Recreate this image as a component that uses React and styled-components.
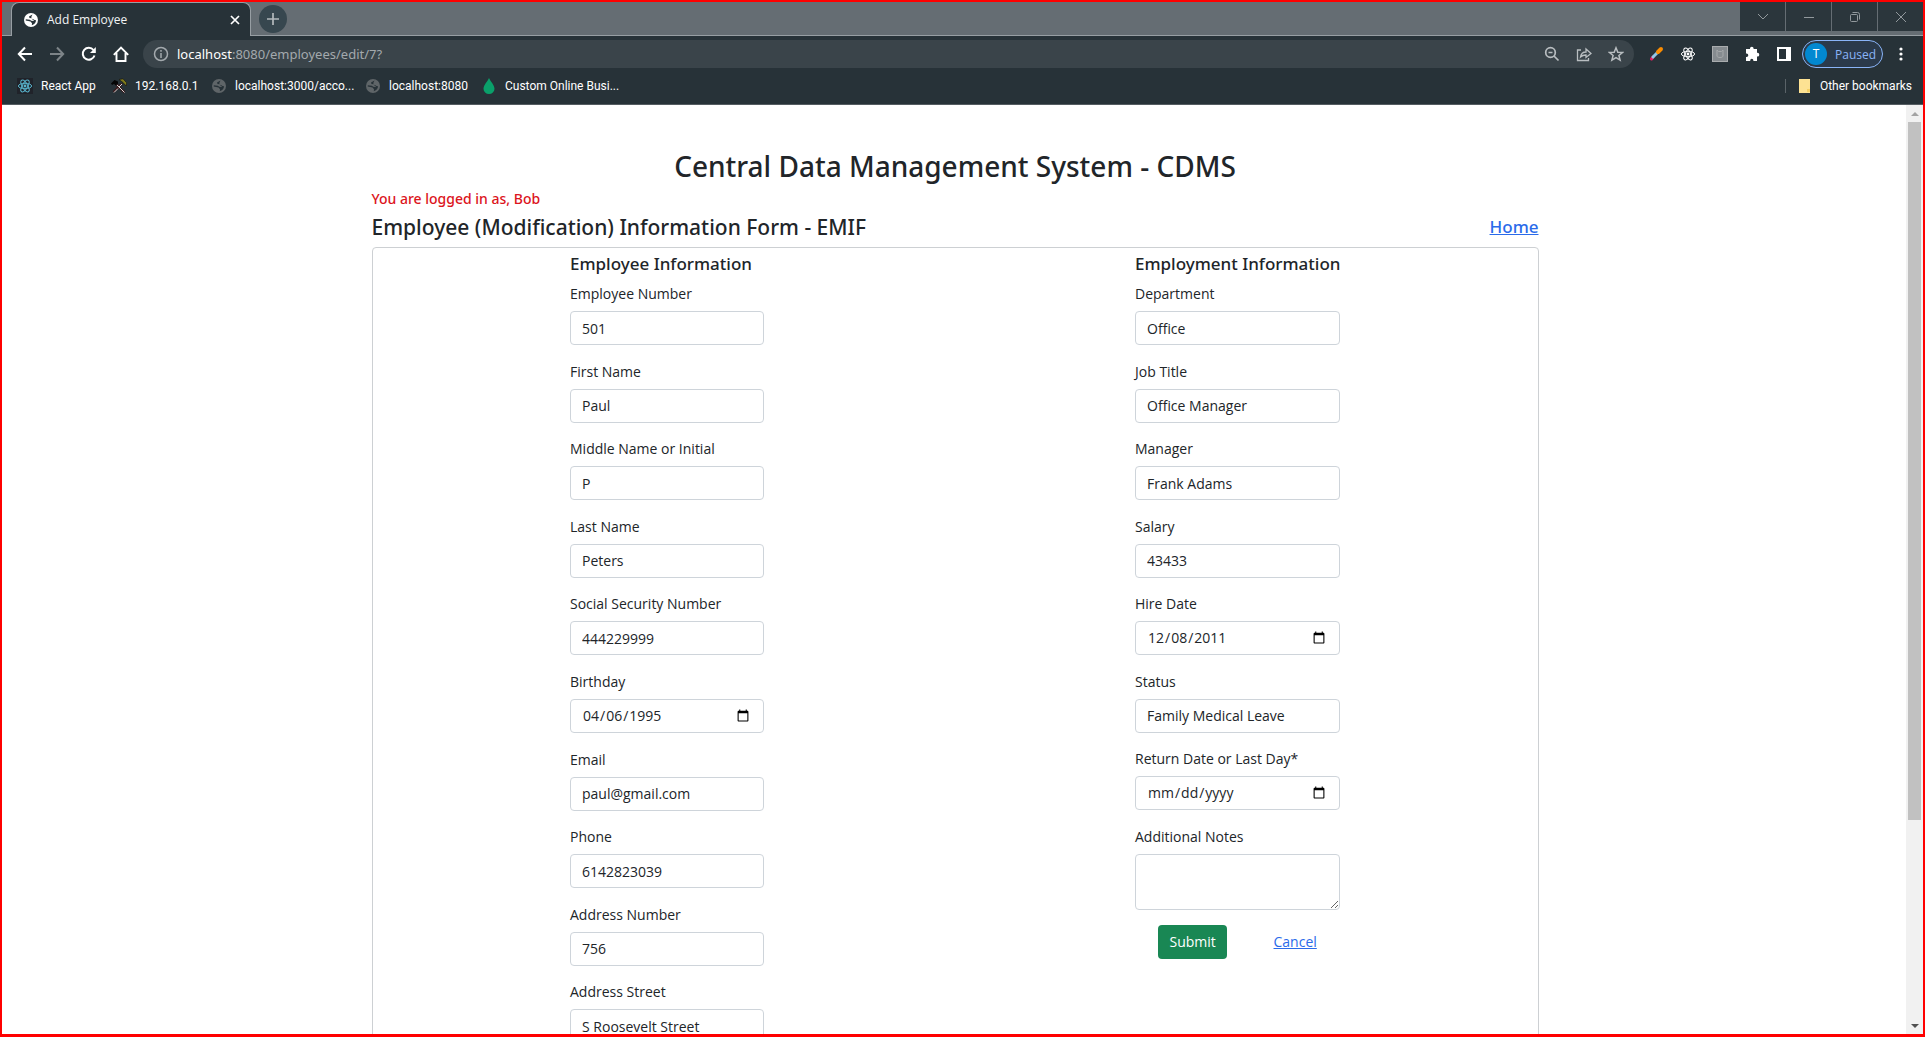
import React from "react";
import styled, { createGlobalStyle } from "styled-components";

const Global = createGlobalStyle`
  *, *::before, *::after { box-sizing: border-box; }
  body { margin: 0; font-family: "Open Sans", "Noto Sans", sans-serif; }
  button, input, textarea { font: inherit; }
`;

const Frame = styled.div`
  height: 100vh;
  display: flex;
  flex-direction: column;
  overflow: hidden;
  border: solid #f00;
  border-width: 2px 2px 3px 2px;
  background: #fff;
`;

const Strip = styled.div`
  display: flex;
  height: 34px;
  padding-left: 9px;
  background: #656d73;
  border-bottom: 1px solid #979ea3;
`;

const Tab = styled.div`
  display: flex;
  align-items: center;
  width: 240px;
  height: 34px;
  padding: 0 10px 0 11px;
  gap: 8px;
  border: 1px solid #979ea3;
  border-bottom: 0;
  border-radius: 8px 8px 0 0;
  background: #273238;
  color: #f1f3f4;
  font-size: 12px;
`;

const TabName = styled.span`
  flex: 1;
`;

const IconButton = styled.button`
  display: inline-flex;
  align-items: center;
  justify-content: center;
  width: ${(p) => p.$w || 32}px;
  height: ${(p) => p.$h || 28}px;
  padding: 0;
  border: 0;
  border-radius: ${(p) => (p.$round ? 14 : 0)}px;
  background: ${(p) => p.$bg || "none"};
  color: ${(p) => p.$color || "#fff"};
`;

const NewTab = styled(IconButton)`
  margin: 3px 0 0 8px;
`;

const WindowButtons = styled.div`
  display: flex;
  gap: 1px;
  height: 29px;
  margin-left: auto;
`;

const Toolbar = styled.div`
  display: flex;
  align-items: center;
  height: 36px;
  padding: 0 6px 0 7px;
  background: #273238;
`;

const Omnibox = styled.div`
  display: flex;
  align-items: center;
  flex: 1;
  height: 28px;
  margin: 0 6px 0 6px;
  padding: 0 2px 0 10px;
  gap: 8px;
  border-radius: 14px;
  background: #3a444a;
  color: #a3a9ad;
  font-family: "Noto Sans", sans-serif;
  font-size: 13px;
`;

const Url = styled.span`
  flex: 1;
  b { font-weight: 400; color: #fff; }
`;

const OmniActions = styled.div`
  display: flex;
`;

const Profile = styled.button`
  display: flex;
  align-items: center;
  width: 81px;
  height: 28px;
  margin: 0 2px;
  padding: 0 2px;
  gap: 8px;
  border: 1px solid #8ab4f8;
  border-radius: 14px;
  background: #2b3a4b;
  color: #8ab4f8;
  font-size: 12px;
`;

const Avatar = styled.span`
  width: 22px;
  height: 22px;
  line-height: 22px;
  border-radius: 50%;
  background: #0288d1;
  color: #fff;
`;

const Bookmarks = styled.nav`
  display: flex;
  align-items: center;
  height: 33px;
  padding: 0 11px 4px 15px;
  background: #273238;
  border-bottom: 1px solid #555d62;
  color: #fff;
  font-family: Roboto, "Open Sans", sans-serif;
  font-size: 12px;
`;

const Bookmark = styled.a`
  display: flex;
  align-items: center;
  gap: 8px;
  width: ${(p) => (p.$w ? p.$w + "px" : "auto")};
  color: inherit;
  text-decoration: none;
  white-space: nowrap;
`;

const Other = styled.div`
  display: flex;
  margin-left: auto;
  padding-left: 12px;
  border-left: 1px solid #5a6368;
`;

const Viewport = styled.div`
  flex: 1;
  min-height: 0;
  display: flex;
`;

const Page = styled.main`
  flex: 1;
  overflow: hidden;
  padding: 43px 0 0 2px;
  color: #212529;
  font-size: 14px;
  line-height: 22px;
`;

const Container = styled.div`
  max-width: 1167px;
  margin: 0 auto;
`;

const Title = styled.h1`
  margin: 0 0 3px;
  text-align: center;
  font-family: "Noto Sans", sans-serif;
  font-size: 28px;
  line-height: 36px;
  font-weight: 500;
`;

const Login = styled.p`
  margin: 0;
  color: #dc1420;
  font-family: "Noto Sans", sans-serif;
  font-size: 14px;
  line-height: 24px;
  font-weight: 500;
`;

const HeadRow = styled.div`
  display: flex;
  justify-content: space-between;
  align-items: center;
  height: 32px;
`;

const FormTitle = styled.h2`
  margin: 0;
  font-family: "Noto Sans", sans-serif;
  font-size: 21px;
  font-weight: 500;
`;

const Link = styled.a`
  color: #2a6bea;
  font-size: 14px;
`;

const HomeLink = styled(Link)`
  font-family: "Noto Sans", sans-serif;
  font-size: 17px;
  font-weight: 500;
`;

const Card = styled.form`
  display: flex;
  justify-content: space-around;
  align-items: flex-start;
  margin-top: 4px;
  padding: 4px 12px;
  border: 1px solid #cdd0d3;
  border-radius: 4px;
`;

const Column = styled.section`
  width: ${(p) => p.$w}px;
`;

const ColumnTitle = styled.h3`
  margin: 0 0 7px;
  font-family: "Noto Sans", sans-serif;
  font-size: 17px;
  line-height: 24px;
  font-weight: 500;
  white-space: nowrap;
`;

const Fields = styled.div`
  display: grid;
  grid-auto-rows: 1fr;
  height: ${(p) => p.$h}px;
`;

const Field = styled.div`
  display: flex;
  flex-direction: column;
  gap: 6px;
`;

const Input = styled.input`
  width: 100%;
  height: 34px;
  padding: 5px 11px;
  border: 1px solid #ced4da;
  border-radius: 4px;
  background: #fff;
  color: #212529;
  line-height: 22px;
`;

const Notes = styled.textarea`
  display: block;
  width: 100%;
  height: 56px;
  padding: 5px 11px;
  border: 1px solid #ced4da;
  border-radius: 4px;
`;

const Actions = styled.div`
  display: flex;
  justify-content: space-around;
  align-items: center;
  margin-top: 15px;
`;

const Submit = styled.button`
  width: 69px;
  height: 34px;
  padding: 0;
  border: 0;
  border-radius: 4px;
  background: #198754;
  color: #fff;
`;

const Scrollbar = styled.div`
  display: flex;
  flex-direction: column;
  align-items: center;
  width: 17px;
  background: #f1f1f1;
`;

const Arrow = styled.div`
  display: flex;
  align-items: center;
  justify-content: center;
  height: 17px;
`;

const Track = styled.div`
  flex: 1;
  width: 13px;
`;

const Thumb = styled.div`
  height: 78%;
  background: #c1c1c1;
`;

const Svg = ({ s = 16, children, vb = "0 0 16 16", ...rest }) => (
  <svg width={s} height={s} viewBox={vb} fill="none" stroke="currentColor" strokeWidth="2" aria-hidden="true" {...rest}>
    {children}
  </svg>
);

const Globe = ({ bg = "#fff", fg = "#273238" }) => (
  <Svg stroke="none">
    <circle cx="8" cy="8" r="7" fill={bg} />
    <path fill={fg} d="M9.500 2.400 6 4.600 6.500 6 9 6.300l.5 1.400 3.600.6c-.2 2.500-2 4.500-4.300 4.900L9 11.300 7.500 9.500 2.700 8.600l.1-1.300 4 .4 1.500 1 2 .2 1-1.300-1.800-.6L8.200 5.300z" />
  </Svg>
);

const Atom = ({ s = 16, color = "#61dafb", bg }) => (
  <Svg s={s} stroke={color} strokeWidth="1">
    {bg && <rect width="16" height="16" fill={bg} stroke="none" />}
    {[0, 60, 120].map((a) => (
      <ellipse key={a} cx="8" cy="8" rx="6.6" ry="2.7" transform={`rotate(${a} 8 8)`} />
    ))}
    <circle cx="8" cy="8" r="1.4" fill={color} stroke="none" />
  </Svg>
);

const Tools = () => (
  <Svg strokeWidth="1.400">
    <path d="M5 6 13.500 14.500M11 5.500 2.500 14" stroke="#3a1a1d" strokeWidth="2.400" />
    <path d="M5.500 6.500l8 8M11 6l-3 3M7 10.500l-4 4" stroke="#d8d8d8" strokeWidth="1" />
    <path d="M0 5.500 3.500 2 7 3.500v2L5 7.500 3 6 1 7z" fill="#050505" stroke="none" />
    <path d="M8 1.500 12 .8l3.700 4-.5 3.200-3.200-3.500z" fill="#7f7a1c" stroke="#111" strokeWidth=".6" />
  </Svg>
);

const Drop = () => (
  <Svg stroke="none"><path fill="#0aa06a" d="M8 0C6.500 3.500 2.500 7 2.500 10.800a5.500 5.200 0 0 0 11 0C13.500 7 9.500 3.500 8 0z" /></Svg>
);

const marks = [
  ["React App", 94, <Atom bg="#20232a" color="#58b4cc" />],
  ["192.168.0.1", 100, <Tools />],
  ["localhost:3000/acco...", 154, <Globe bg="#5f6568" />],
  ["localhost:8080", 116, <Globe bg="#5f6568" />],
  ["Custom Online Busi...", 0, <Drop />],
];

const employee = [
  ["Employee Number", "501"],
  ["First Name", "Paul"],
  ["Middle Name or Initial", "P"],
  ["Last Name", "Peters"],
  ["Social Security Number", "444229999"],
  ["Birthday", "1995-04-06", "date"],
  ["Email", "paul@gmail.com", "email"],
  ["Phone", "6142823039"],
  ["Address Number", "756"],
  ["Address Street", "S Roosevelt Street"],
];

const employment = [
  ["Department", "Office"],
  ["Job Title", "Office Manager"],
  ["Manager", "Frank Adams"],
  ["Salary", "43433"],
  ["Hire Date", "2011-12-08", "date"],
  ["Status", "Family Medical Leave"],
  ["Return Date or Last Day*", "", "date"],
];

const FieldList = ({ items, height }) => (
  <Fields $h={height}>
    {items.map(([label, value, type = "text"]) => {
      const id = label.toLowerCase().replace(/[^a-z]+/g, "-");
      return (
        <Field key={id}>
          <label htmlFor={id}>{label}</label>
          <Input id={id} type={type} defaultValue={value} />
        </Field>
      );
    })}
  </Fields>
);

function Browser() {
  return (
    <header>
      <Strip>
        <Tab>
          <Globe />
          <TabName>Add Employee</TabName>
          <IconButton $w={10} aria-label="Close tab"><Svg s={10} vb="0 0 10 10" strokeWidth="1.700"><path d="M1 1l8 8M9 1 1 9" /></Svg></IconButton>
        </Tab>
        <NewTab $w={28} $round $bg="#37474f" $color="#b4babd" aria-label="New tab"><Svg s={12} vb="0 0 12 12" strokeWidth="1.700"><path d="M6 0v12M0 6h12" /></Svg></NewTab>
        <WindowButtons>
          {[
            ["Search tabs", <path d="M3 5l5 5 5-5" />],
            ["Minimize", <path d="M3 8.500h10" />],
            ["Restore", <g><rect x="3.500" y="5.500" width="7" height="7" rx="1" /><path d="M5.500 3.500h5a2 2 0 0 1 2 2v5" /></g>],
            ["Close", <path d="M3 3l10 10M13 3 3 13" />],
          ].map(([name, shape]) => (
            <IconButton key={name} $w={45} $h={29} $bg="#2b363c" $color="#92999d" aria-label={name}><Svg strokeWidth="1">{shape}</Svg></IconButton>
          ))}
        </WindowButtons>
      </Strip>
      <Toolbar>
        <IconButton aria-label="Back"><Svg><path d="M15 8H2M8 1.500 1.800 8 8 14.500" /></Svg></IconButton>
        <IconButton $color="#7d8488" aria-label="Forward"><Svg><path d="M1 8h13M8 1.500 14.200 8 8 14.500" /></Svg></IconButton>
        <IconButton aria-label="Reload"><Svg><path d="M13.500 9.500A6 6 0 1 1 12.500 4" /><path d="M14.800 1v6H9z" fill="currentColor" stroke="none" /></Svg></IconButton>
        <IconButton aria-label="Home"><Svg strokeWidth="1.900"><path d="M.8 8.800 8 1.500l7.200 7.300M3.500 7v8h9V7" /></Svg></IconButton>
        <Omnibox>
          <Svg strokeWidth="1.500"><circle cx="8" cy="8" r="6.500" /><path d="M8 7v5M8 4v1.800" /></Svg>
          <Url><b>localhost</b>:8080/employees/edit/7?</Url>
          <OmniActions>
            <IconButton $color="#b9bec1" aria-label="Zoom"><Svg strokeWidth="1.700"><circle cx="6.500" cy="6.500" r="4.800" /><path d="M10 10l4.500 4.500M4.500 6.500h4" /></Svg></IconButton>
            <IconButton $color="#b9bec1" aria-label="Share"><Svg strokeWidth="1.300"><path d="M5 4H1.500v10.500h11V12M4.500 11c.5-3.500 2.500-5 5.500-5V3l5 4.500-5 4V9c-2.500 0-4 .5-5.500 2z" /></Svg></IconButton>
            <IconButton $color="#b9bec1" aria-label="Bookmark this page"><Svg strokeWidth="1.500"><path d="M8 1.800l1.800 4.400 4.700.3-3.600 3 1.200 4.600L8 11.600l-4.100 2.500 1.200-4.600-3.600-3 4.700-.3z" /></Svg></IconButton>
          </OmniActions>
        </Omnibox>
        <IconButton aria-label="Color picker"><Svg strokeWidth="3" strokeLinecap="round"><path d="M3.500 13 5 11" stroke="#e91e63" /><path d="M5 11l4-4" stroke="#8fc7e8" /><path d="M10 6l3-3" stroke="#fb8c00" strokeWidth="4" /></Svg></IconButton>
        <IconButton aria-label="React tools"><Atom color="#fff" /></IconButton>
        <IconButton aria-label="Extension"><Svg strokeWidth="1"><rect x=".5" y=".5" width="15" height="15" fill="#858b8f" stroke="#a9acae" /><path d="M5 4v6c0 2 6 2 6 0V4L9.500 5.500h-3z" stroke="#a5a8aa" /></Svg></IconButton>
        <IconButton aria-label="Extensions"><Svg stroke="none"><path fill="currentColor" d="M6 2.500a1.800 1.800 0 0 1 3.600 0V3H13v3.800h.4a1.900 1.900 0 0 1 0 3.800H13V15H9.400v-.6a1.600 1.600 0 0 0-3.200 0v.6H2v-4h.6a1.700 1.700 0 0 0 0-3.400H2V3h4z" /></Svg></IconButton>
        <IconButton aria-label="Side panel"><Svg><path d="M2 2h12v12H2z" /><path d="M10 2h4v12h-4z" fill="currentColor" stroke="none" /></Svg></IconButton>
        <Profile><Avatar>T</Avatar>Paused</Profile>
        <IconButton aria-label="Menu"><Svg stroke="none" fill="currentColor"><circle cx="8" cy="3" r="1.600" /><circle cx="8" cy="8" r="1.600" /><circle cx="8" cy="13" r="1.600" /></Svg></IconButton>
      </Toolbar>
      <Bookmarks>
        {marks.map(([name, w, icon]) => (
          <Bookmark key={name} href="#" $w={w}>{icon}{name}</Bookmark>
        ))}
        <Other>
          <Bookmark href="#"><Svg s={14} vb="0 0 14 14" stroke="none"><path d="M1 0h11v14H1z" fill="#fde293" /><path d="M9 10h3v3H9z" fill="#f4cf63" /></Svg>Other bookmarks</Bookmark>
        </Other>
      </Bookmarks>
    </header>
  );
}

export default function App() {
  return (
    <Frame>
      <Global />
      <Browser />
      <Viewport>
        <Page>
          <Container>
            <Title>Central Data Management System - CDMS</Title>
            <Login>You are logged in as, Bob</Login>
            <HeadRow>
              <FormTitle>Employee (Modification) Information Form - EMIF</FormTitle>
              <HomeLink href="#">Home</HomeLink>
            </HeadRow>
            <Card onSubmit={(e) => e.preventDefault()}>
              <Column $w={194}>
                <ColumnTitle>Employee Information</ColumnTitle>
                <FieldList items={employee} height={776} />
              </Column>
              <Column $w={205}>
                <ColumnTitle>Employment Information</ColumnTitle>
                <FieldList items={employment} height={543} />
                <Field>
                  <label htmlFor="notes">Additional Notes</label>
                  <Notes id="notes" />
                </Field>
                <Actions>
                  <Submit type="submit">Submit</Submit>
                  <Link href="#">Cancel</Link>
                </Actions>
              </Column>
            </Card>
          </Container>
        </Page>
        <Scrollbar>
          <Arrow><Svg s={8} vb="0 0 8 8" stroke="none"><path d="M0 6l4-4 4 4z" fill="#a3a3a3" /></Svg></Arrow>
          <Track><Thumb /></Track>
          <Arrow><Svg s={8} vb="0 0 8 8" stroke="none"><path d="M0 2l4 4 4-4z" fill="#505050" /></Svg></Arrow>
        </Scrollbar>
      </Viewport>
    </Frame>
  );
}
